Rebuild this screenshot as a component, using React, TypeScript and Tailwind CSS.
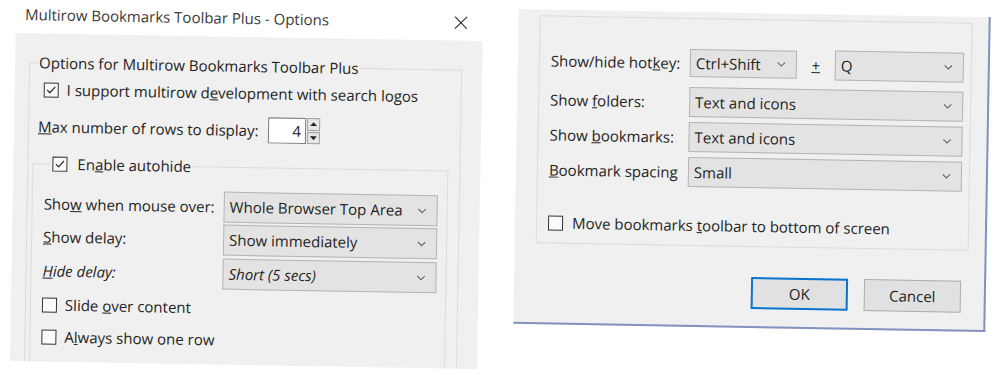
import type { ReactNode } from 'react'

const font = { fontFamily: '"Open Sans", "Noto Sans", sans-serif' }

function Check({ checked }: { checked?: boolean }) {
  return (
    <span className="w-[15px] h-[15px] border border-[#333] bg-[#fafafa] flex items-center justify-center shrink-0">
      {checked && (
        <svg width="11" height="11" viewBox="0 0 11 11">
          <path d="M1.5 5.5 L4.2 8.2 L9.5 2.2" fill="none" stroke="#333" strokeWidth="1.3" />
        </svg>
      )}
    </span>
  )
}

function Chevron() {
  return (
    <svg width="9" height="6" viewBox="0 0 9 6" className="shrink-0">
      <path d="M0.8 1 L4.5 4.6 L8.2 1" fill="none" stroke="#666" strokeWidth="1.1" />
    </svg>
  )
}

function Select({ value, width, italic, height = 'h-[31px]' }: { value: string; width: string; italic?: boolean; height?: string }) {
  return (
    <div className={`${width} ${height} bg-[#e3e3e3] border border-[#b4b4b4] flex items-center justify-between pl-[5px] pr-[10px] shrink-0`}>
      <span className={italic ? 'italic' : ''}>{value}</span>
      <Chevron />
    </div>
  )
}

function Row({ label, children, className = '' }: { label: ReactNode; children: ReactNode; className?: string }) {
  return (
    <div className={`flex items-center ${className}`}>
      {label}
      {children}
    </div>
  )
}

export default function App() {
  return (
    <div className="w-[1000px] h-[381px] bg-white flex overflow-hidden text-[15px] text-[#232323]" style={font}>
      {/* left dialog */}
      <div className="w-[467px] ml-[13px] flex flex-col rotate-[1deg] shrink-0">
        <div className="h-[37px] pl-[9px] pr-[15px] flex items-center justify-between">
          <span className="text-[#3a3a3a]">Multirow Bookmarks Toolbar Plus - Options</span>
          <svg width="14" height="14" viewBox="0 0 14 14">
            <path d="M1 1 L13 13 M13 1 L1 13" stroke="#333" strokeWidth="1.2" />
          </svg>
        </div>
        <div className="bg-[#f0f0f0] h-[328px] overflow-hidden pt-[19px] pl-[14px] pr-[20px]">
          <fieldset className="border border-[#dcdcdc] pl-[8px] h-[320px]">
            <legend className="px-[1px] leading-[20px]">Options for Multirow Bookmarks Toolbar Plus</legend>
            <div className="flex items-center h-[18px] mt-[8px] ml-[6px] gap-[8px]">
              <Check checked />
              <span>I support multirow d<u>e</u>velopment with search logos</span>
            </div>
            <Row className="h-[26px] mt-[15px] ml-[1px]" label={<span className="w-[230px]"><u>M</u>ax number of rows to display:</span>}>
              <div className="w-[38px] h-[26px] bg-white border border-[#7a7a7a] flex items-center justify-end pr-[4px]">4</div>
              <div className="ml-[1px] w-[13px] h-[26px] flex flex-col gap-[1px]">
                <div className="flex-1 bg-[#e6e6e6] border border-[#a0a0a0] flex items-center justify-center">
                  <svg width="7" height="4" viewBox="0 0 7 4"><path d="M0 4 L3.5 0 L7 4Z" fill="#222" /></svg>
                </div>
                <div className="flex-1 bg-[#e6e6e6] border border-[#a0a0a0] flex items-center justify-center">
                  <svg width="7" height="4" viewBox="0 0 7 4"><path d="M0 0 L3.5 4 L7 0Z" fill="#222" /></svg>
                </div>
              </div>
            </Row>
            <fieldset className="border border-[#dcdcdc] ml-[-4px] mr-[11px] mt-[14px] pl-[11px] pr-[9px] h-[220px]">
              <legend className="ml-[6px] px-[2px] leading-[20px]">
                <span className="flex items-center gap-[10px]">
                  <Check checked />
                  <span>En<u>a</u>ble autohide</span>
                </span>
              </legend>
              <Row className="mt-[15px]" label={<span className="w-[180px]">Sho<u>w</u> when mouse over:</span>}>
                <Select value="Whole Browser Top Area" width="w-[214px]" />
              </Row>
              <Row className="mt-[2px]" label={<span className="w-[180px]"><u>S</u>how delay:</span>}>
                <Select value="Show immediately" width="w-[214px]" />
              </Row>
              <Row className="mt-[3px]" label={<span className="w-[180px] italic"><u>H</u>ide delay:</span>}>
                <Select value="Short (5 secs)" width="w-[214px]" italic />
              </Row>
              <div className="flex items-center h-[20px] mt-[8px] gap-[8px]">
                <Check />
                <span>Slide <u>o</u>ver content</span>
              </div>
              <div className="flex items-center h-[20px] mt-[12px] gap-[8px]">
                <Check />
                <span>A<u>l</u>ways show one row</span>
              </div>
            </fieldset>
          </fieldset>
        </div>
      </div>

      {/* right dialog */}
      <div className="w-[472px] h-[315px] ml-[36px] mt-[13px] bg-[#f0f0f0] border-r-2 border-b-2 border-[#8291bf] rotate-[1deg] shrink-0 pl-[21px] pr-[16px] pt-[6px]">
        <div className="border border-[#dcdcdc] h-[228px] pl-[11px] pr-[7px]">
          <Row className="h-[28px] mt-[30px]" label={<span className="w-[139px]">Show/hide hot<u>k</u>ey:</span>}>
            <Select value="Ctrl+Shift" width="w-[107px]" height="h-[28px]" />
            <span className="w-[38px] text-center"><u>+</u></span>
            <Select value="Q" width="w-[129px]" height="h-[30px]" />
          </Row>
          <Row className="mt-[10px]" label={<span className="w-[139px]">Show <u>f</u>olders:</span>}>
            <Select value="Text and icons" width="w-[274px]" height="h-[30px]" />
          </Row>
          <Row className="mt-[5px]" label={<span className="w-[139px]">Show <u>b</u>ookmarks:</span>}>
            <Select value="Text and icons" width="w-[274px]" height="h-[30px]" />
          </Row>
          <Row className="mt-[5px]" label={<span className="w-[139px]"><u>B</u>ookmark spacing</span>}>
            <Select value="Small" width="w-[274px]" height="h-[30px]" />
          </Row>
          <div className="flex items-center h-[20px] mt-[28px] gap-[9px]">
            <Check />
            <span>Move bookmarks <u>t</u>oolbar to bottom of screen</span>
          </div>
        </div>
        <div className="flex justify-end gap-[16px] mt-[30px] mr-[7px]">
          <button className="w-[97px] h-[32px] bg-[#e1e1e1] border-2 border-[#0a74d1]">OK</button>
          <button className="w-[97px] h-[32px] bg-[#e1e1e1] border border-[#adadad]">Cancel</button>
        </div>
      </div>
    </div>
  )
}
